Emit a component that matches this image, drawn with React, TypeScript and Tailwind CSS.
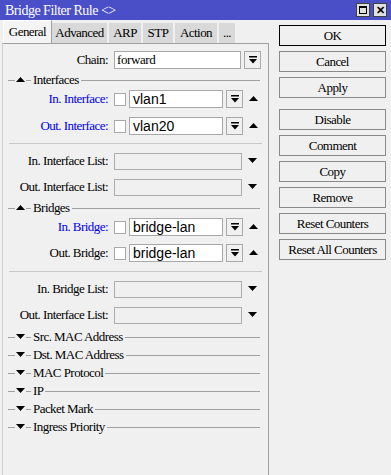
import React from 'react';

const serif = { fontFamily: '"Liberation Serif", "Times New Roman", serif' };

const DropIcon: React.FC = () => (
  <svg width="8" height="8" viewBox="0 0 8 8">
    <rect x="0" y="0" width="8" height="1.5" fill="#000" />
    <polygon points="0,3 8,3 4,7.5" fill="#000" />
  </svg>
);

const DownTri: React.FC = () => (
  <svg width="9" height="6" viewBox="0 0 9 6">
    <polygon points="0,0 9,0 4.5,5" fill="#000" />
  </svg>
);

const UpTri: React.FC = () => (
  <svg width="9" height="6" viewBox="0 0 9 6">
    <polygon points="0,5 9,5 4.5,0" fill="#000" />
  </svg>
);

const Label: React.FC<{ text: string; blue?: boolean }> = ({ text, blue }) => (
  <div className={`w-[105px] shrink-0 whitespace-nowrap text-right text-[13px] tracking-[-0.55px] ${blue ? 'text-[#0000f0]' : 'text-black'}`}>
    {text}
  </div>
);

const DropBtn: React.FC = () => (
  <div className="ml-[3px] flex h-[18px] w-[17px] items-center justify-center border border-[#a9a9a9] bg-[#f0f0f0]">
    <DropIcon />
  </div>
);

const ChainRow: React.FC = () => (
  <div className="mt-[7px] flex h-[18px] items-center">
    <Label text="Chain:" />
    <div className="ml-[6px] flex h-[18px] w-[127px] items-center border border-[#a9a9a9] bg-white pl-[2px] text-[13px] tracking-[-0.4px]">
      forward
    </div>
    <DropBtn />
  </div>
);

const ValueRow: React.FC<{ label: string; value: string; blue?: boolean; className?: string }> = ({ label, value, blue, className }) => (
  <div className={`flex h-[18px] items-center ${className ?? ''}`}>
    <Label text={label} blue={blue} />
    <div className="ml-[6px] h-[13px] w-[12px] border border-[#a9a9a9] bg-white" />
    <div
      className="ml-[3px] flex h-[18px] w-[94px] items-center border border-[#a9a9a9] bg-white pl-[3px] text-[14px] text-black"
      style={{ fontFamily: '"Liberation Sans", Arial, sans-serif' }}
    >
      {value}
    </div>
    <DropBtn />
    <div className="ml-[6px] flex items-center">
      <UpTri />
    </div>
  </div>
);

const ListRow: React.FC<{ label: string; className?: string }> = ({ label, className }) => (
  <div className={`flex h-[18px] items-center ${className ?? ''}`}>
    <Label text={label} />
    <div className="ml-[6px] h-[17px] w-[128px] border border-[#adadad] bg-[#f0f0f0]" />
    <div className="ml-[6px] flex items-center">
      <DownTri />
    </div>
  </div>
);

const Section: React.FC<{ title: string; open?: boolean; className?: string }> = ({ title, open, className }) => (
  <div className={`flex h-[18px] items-center pl-[5px] pr-[8px] ${className ?? ''}`}>
    <div className="h-px w-[7px] bg-[#a0a0a0]" />
    <div className="mx-[1px] flex items-center">{open ? <UpTri /> : <DownTri />}</div>
    <div className="h-px w-[5px] bg-[#a0a0a0]" />
    <div className="whitespace-nowrap px-[2px] text-[13px] tracking-[-0.55px] text-black">{title}</div>
    <div className="h-px flex-1 bg-[#a0a0a0]" />
  </div>
);

const Sep: React.FC<{ className?: string }> = ({ className }) => (
  <div className={`mx-[6px] h-px bg-[#c8c8c8] ${className ?? ''}`} />
);

const tabs = ['Advanced', 'ARP', 'STP', 'Action', '...'];
const tabWidths = ['w-[57px]', 'w-[34px]', 'w-[32px]', 'w-[44px]', 'w-[18px]'];

const buttons = ['Cancel', 'Apply', 'Disable', 'Comment', 'Copy', 'Remove', 'Reset Counters', 'Reset All Counters'];

export default function App() {
  return (
    <div className="h-[475px] w-[391px] overflow-hidden bg-[#f0f0f0]" style={serif}>
      <div className="flex h-[20px] items-center bg-[#4b4fc7] pl-[5px] pr-[4px]">
        <div className="flex-1 text-[14px] tracking-[-0.5px] text-white">Bridge Filter Rule &lt;&gt;</div>
        <div className="flex gap-[3px]">
          <div className="flex h-[14px] w-[14px] items-center justify-center border border-[#404040] bg-[#e0e0e0]">
            <div className="h-[8px] w-[8px] border-[1.5px] border-black border-t-2" />
          </div>
          <div className="flex h-[14px] w-[14px] items-center justify-center border border-[#404040] bg-[#e0e0e0] text-[11px] font-bold leading-none text-black" style={{ fontFamily: '"Liberation Sans", Arial, sans-serif' }}>
            ✕
          </div>
        </div>
      </div>
      <div className="flex">
        <div className="w-[269px] shrink-0 pl-[2px]">
          <div className="flex h-[23px] items-end pl-[1px]">
            <div className="flex h-[23px] w-[49px] items-center justify-center border-l border-t border-r border-l-white border-t-white border-r-[#a0a0a0] bg-[#f4f4f4] text-[13px] tracking-[-0.55px] text-black">
              General
            </div>
            {tabs.map((t, i) => (
              <div
                key={t}
                className={`flex h-[20px] ${tabWidths[i]} items-center justify-center border-r-2 border-[#f0f0f0] bg-[#d9d9d9] text-[13px] tracking-[-0.55px] text-black`}
              >
                {t}
              </div>
            ))}
          </div>
          <div className="h-[440px] border-l border-r border-t border-l-[#d0d0d0] border-r-[#a0a0a0] border-t-[#a0a0a0]">
            <ChainRow />
            <Section title="Interfaces" open className="mt-[2px]" />
            <ValueRow label="In. Interface:" value="vlan1" blue className="mt-[1px]" />
            <ValueRow label="Out. Interface:" value="vlan20" blue className="mt-[9px]" />
            <Sep className="mt-[8px]" />
            <ListRow label="In. Interface List:" className="mt-[8px]" />
            <ListRow label="Out. Interface List:" className="mt-[8px]" />
            <Section title="Bridges" open className="mt-[3px]" />
            <ValueRow label="In. Bridge:" value="bridge-lan" blue className="mt-[1px]" />
            <ValueRow label="Out. Bridge:" value="bridge-lan" className="mt-[8px]" />
            <Sep className="mt-[9px]" />
            <ListRow label="In. Bridge List:" className="mt-[8px]" />
            <ListRow label="Out. Interface List:" className="mt-[8px]" />
            <Section title="Src. MAC Address" className="mt-[4px]" />
            <Section title="Dst. MAC Address" />
            <Section title="MAC Protocol" />
            <Section title="IP" />
            <Section title="Packet Mark" />
            <Section title="Ingress Priority" />
          </div>
        </div>
        <div className="ml-[10px] flex w-[107px] flex-col pt-[5px]">
          <div className="flex h-[21px] items-center justify-center border border-black bg-[#f0f0f0] text-[13px] tracking-[-0.55px] text-black">
            OK
          </div>
          {buttons.map((b) => (
            <div
              key={b}
              className={`${b === 'Disable' ? 'mt-[11px]' : 'mt-[5px]'} flex h-[21px] items-center justify-center border border-[#8a8a8a] bg-[#f0f0f0] text-[13px] tracking-[-0.55px] text-black`}
            >
              {b}
            </div>
          ))}
        </div>
      </div>
    </div>
  );
}
